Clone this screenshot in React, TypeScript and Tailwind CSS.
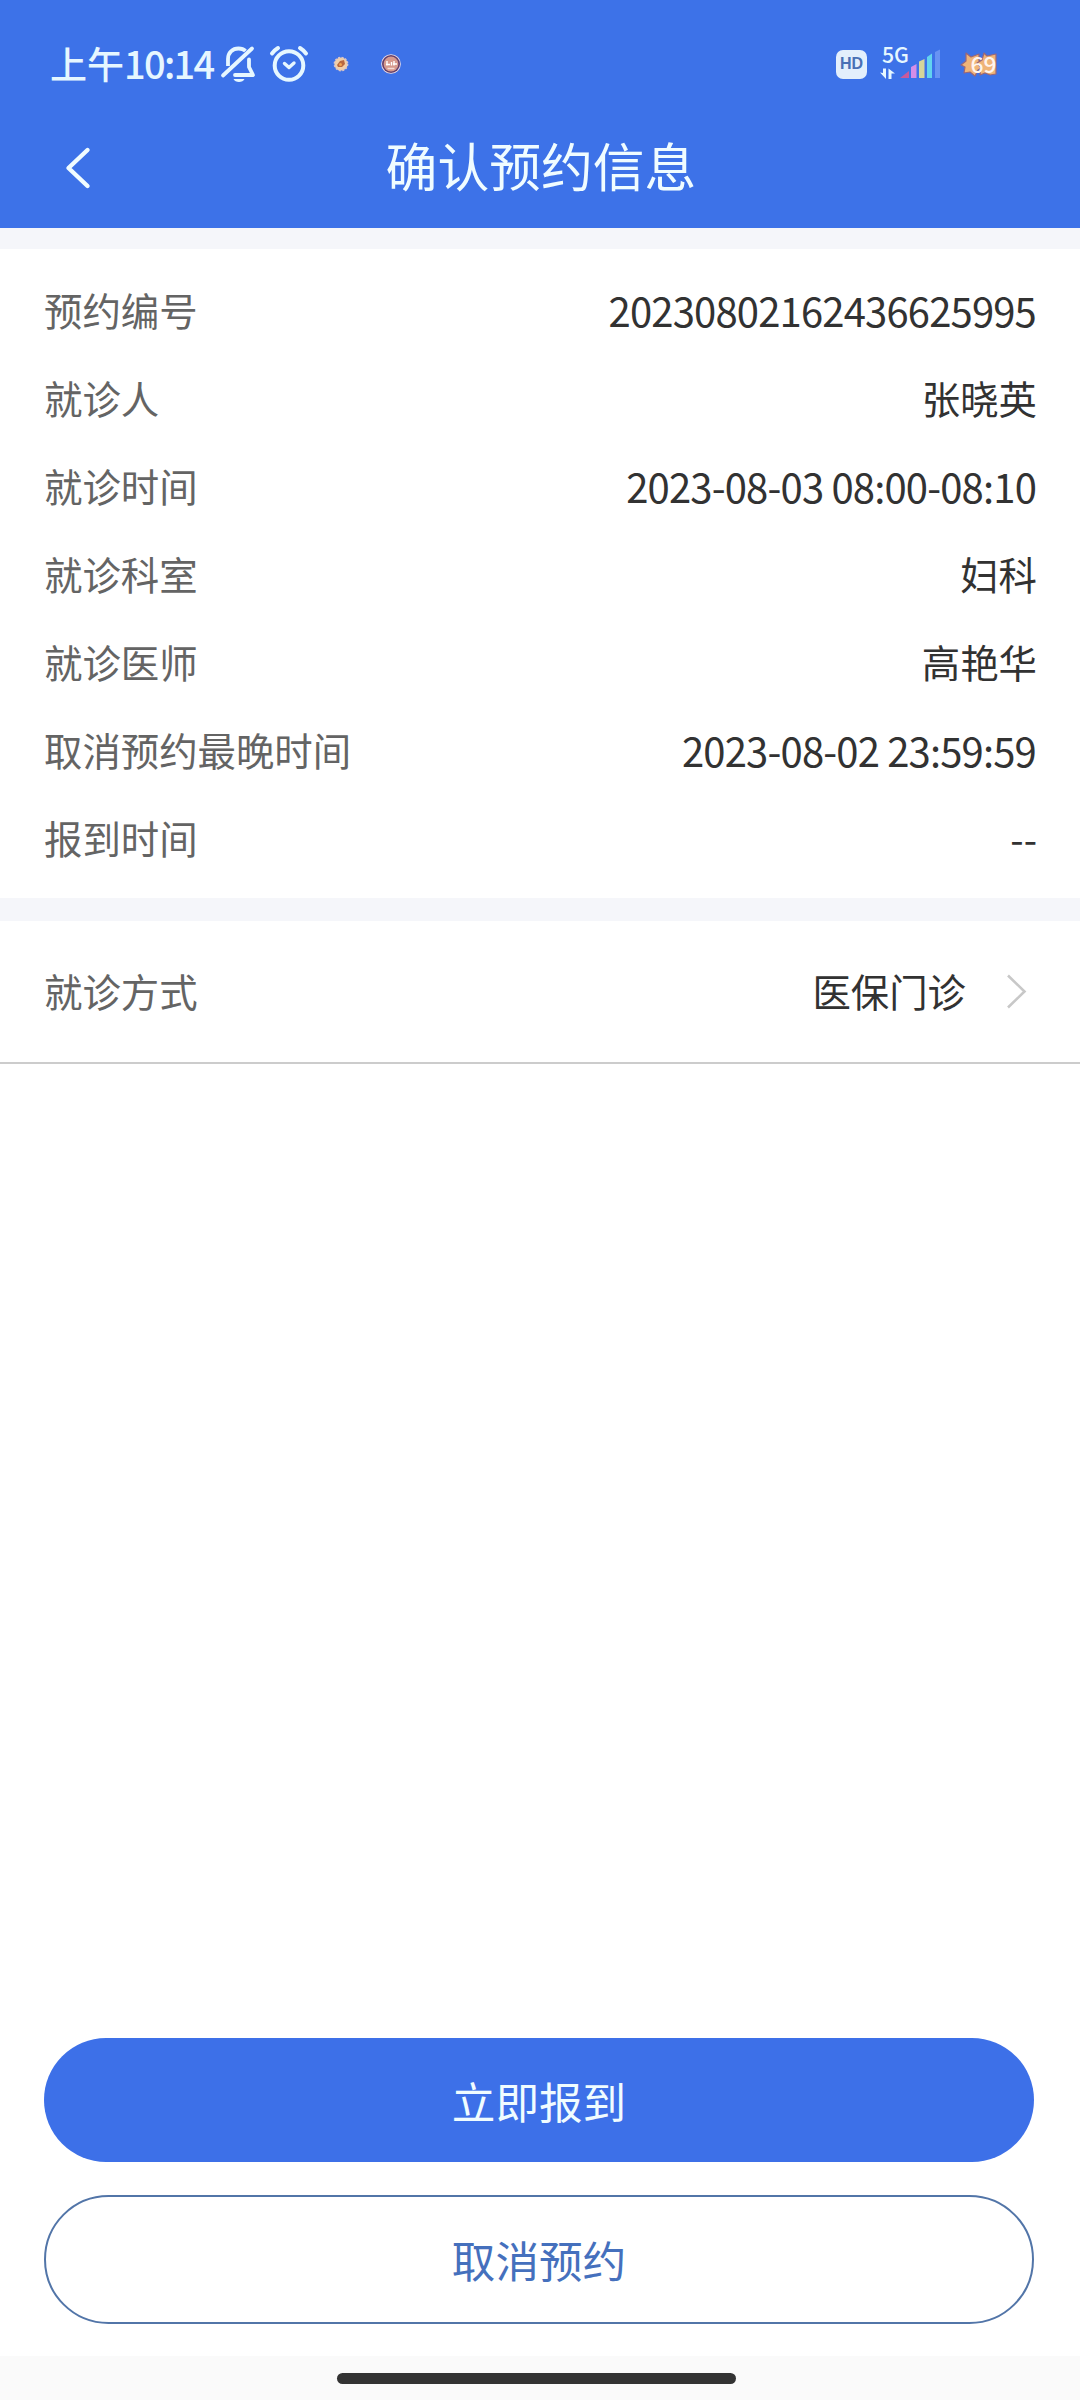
import clsx from "clsx";

const DETAILS = [
  { label: "预约编号", value: "20230802162436625995", numeric: true },
  { label: "就诊人", value: "张晓英" },
  { label: "就诊时间", value: "2023-08-03 08:00-08:10", numeric: true },
  { label: "就诊科室", value: "妇科" },
  { label: "就诊医师", value: "高艳华" },
  { label: "取消预约最晚时间", value: "2023-08-02 23:59:59", numeric: true },
  { label: "报到时间", value: "--" },
];

function MutedBellIcon() {
  return (
    <svg className="ml-[7px] h-[40px] w-[38px]" viewBox="0 0 38 40" fill="none">
      <g stroke="#e6f7ff" strokeWidth="3.8" strokeLinejoin="round">
        <path d="M8 22V15C8 8.500 12.500 4.500 18.500 4.500C21.500 4.500 24 5.500 25.500 7" />
        <path d="M29 15.500V23L33 31H15" strokeLinecap="round" />
        <path d="M3 31.500L32 4.500" strokeLinecap="round" />
      </g>
      <path d="M13.500 35H24.500C23 39 15 39 13.500 35Z" fill="#e6f7ff" />
    </svg>
  );
}

function AlarmIcon() {
  return (
    <svg
      className="ml-[11px] h-[40px] w-[40px]"
      viewBox="0 0 40 40"
      fill="none"
      stroke="#e6f7ff"
      strokeWidth="4"
      strokeLinecap="round"
      strokeLinejoin="round"
    >
      <circle cx="20" cy="21.500" r="14.300" />
      <path d="M3 9.500C4.500 7.500 6.500 5.500 9 4" />
      <path d="M37 9.500C35.500 7.500 33.500 5.500 31 4" />
      <path d="M15.500 19.500L20 23.500L25 19" strokeWidth="3.400" />
    </svg>
  );
}

function AppBadges() {
  return (
    <svg className="ml-[20px] h-[24px] w-[80px]" viewBox="0 0 80 24">
      <circle cx="12" cy="12" r="6.600" fill="#f1cfa8" stroke="#d9c4c8" strokeWidth="1.600" strokeDasharray="2 1.500" />
      <path d="M8 13L11 9L15 8L16 12L13 15L9 15Z" fill="#b8683f" />
      <circle cx="11.500" cy="12.500" r="1.500" fill="#f2a24d" />
      <circle cx="62" cy="12" r="9.800" fill="#f0dfe6" />
      <circle cx="62" cy="12" r="9" fill="#643f6b" />
      <circle cx="62" cy="12" r="7.400" fill="#d69a8e" />
      <path d="M58 9V13.500M57 12.500H61M62.500 10V13.500M65 9V13.500M64 12H68" stroke="#fff" strokeWidth="1.400" />
      <path d="M58.500 16.500H65.500" stroke="#f6dcd5" strokeWidth="1.500" />
    </svg>
  );
}

function SignalIcon() {
  return (
    <svg className="ml-[11px] h-[56px] w-[64px]" viewBox="878 36 64 56">
      <text
        x="882"
        y="62.500"
        fill="#e6f7ff"
        fontSize="22"
        fontWeight="500"
        textLength="27"
        lengthAdjust="spacingAndGlyphs"
      >
        5G
      </text>
      <path d="M880 72.500L886 79V68.500H883V73ZM888.500 68.500L895 73.500H891.500V79H888.500Z" fill="#e6f7ff" />
      <path d="M900 78L909 71V78Z" fill="#c85a9c" />
      <path d="M911 78V67L916.500 64V78Z" fill="#d58ee8" />
      <path d="M919 78V61.500L924.500 59V78Z" fill="#d5d59a" />
      <path d="M927 78V57L932 53.500V78Z" fill="#62d3ef" />
      <path d="M935 78V52L940 49.500V78Z" fill="#6893f3" />
    </svg>
  );
}

function BatteryIcon() {
  return (
    <svg className="ml-[18px] h-[56px] w-[40px]" viewBox="960 36 40 56">
      <g fill="#efb478" stroke="#9a6778" strokeWidth="1.200" strokeLinejoin="round">
        <path d="M966 53L971 57L979 54L979 61L983 67L978 70L975 76L970 72L964 73L965 67L961 65L966 61Z" />
        <path d="M984 53L987 56L996 54V74L990 75L985 73L980 75L981 68L977 63L982 60Z" />
      </g>
      <text
        x="970.500"
        y="72.500"
        fill="#fff4ee"
        fontSize="22"
        fontWeight="500"
        textLength="26"
        lengthAdjust="spacingAndGlyphs"
      >
        69
      </text>
    </svg>
  );
}

function StatusBar() {
  return (
    <div className="flex h-[128px] items-center pr-[80px] pl-[50px] text-[#e6f7ff]">
      <span className="pb-[3px] text-[37px] leading-none font-medium whitespace-nowrap">
        上午<span className="text-[38px] tracking-[-1.7px]">10:14</span>
      </span>
      <MutedBellIcon />
      <AlarmIcon />
      <AppBadges />
      <div className="ml-auto flex items-center">
        <span className="flex h-[29px] w-[31px] items-center justify-center rounded-[7px] bg-[#e3effc] font-['Liberation_Sans'] text-[16px] leading-none font-bold text-[#4970b5]">
          HD
        </span>
        <SignalIcon />
        <BatteryIcon />
      </div>
    </div>
  );
}

export default function App() {
  return (
    <div className="flex h-[2400px] w-[1080px] flex-col overflow-hidden bg-white font-['Noto_Sans_CJK_SC',sans-serif] text-[38.4px] text-[#323232]">
      <header className="h-[228px] bg-[#3d72e8]">
        <StatusBar />
        <div className="grid h-[80px] grid-cols-[100px_1fr_100px] items-center">
          <button type="button" aria-label="返回" className="pl-[64px]">
            <svg
              className="h-[44px] w-[28px]"
              viewBox="0 0 28 44"
              fill="none"
              stroke="#f0fcff"
              strokeWidth="4.4"
              strokeLinecap="round"
              strokeLinejoin="round"
            >
              <path d="M23.500 4L4.500 22L23.500 40" />
            </svg>
          </button>
          <h1 className="pb-[6px] pl-[2px] text-center text-[51.8px] leading-[74px] text-[#f0fcff]">
            确认预约信息
          </h1>
        </div>
      </header>

      <div className="h-[21px] bg-[#f5f6fa]" />

      <dl className="h-[649px] pt-[17px] pr-[43px] pl-[44px]">
        {DETAILS.map((item) => (
          <div key={item.label} className="flex h-[88px] items-center justify-between">
            <dt className="text-[#646464]">{item.label}</dt>
            <dd className={clsx(item.numeric && "mr-[1px] text-[40px] tracking-[-0.83px]")}>
              {item.value}
            </dd>
          </div>
        ))}
      </dl>

      <div className="h-[23px] bg-[#f5f6fa]" />

      <button
        type="button"
        className="flex h-[143px] items-center border-b-2 border-[#cccccc] pr-[53px] pb-[1px] pl-[44px]"
      >
        <span className="text-[#646464]">就诊方式</span>
        <span className="ml-auto">医保门诊</span>
        <svg
          className="ml-[41px] h-[36px] w-[20px]"
          viewBox="0 0 20 36"
          fill="none"
          stroke="#c8c8c8"
          strokeWidth="2.600"
        >
          <path d="M1 2.500L17.500 18.500L1 34.500" />
        </svg>
      </button>

      <div className="mt-auto flex flex-col gap-[33px] pr-[46px] pb-[32px] pl-[44px] text-[43.6px]">
        <button type="button" className="h-[124px] rounded-full bg-[#3d70e8] pt-[2px] text-[#f0fcff]">
          立即报到
        </button>
        <button type="button" className="h-[129px] rounded-full border-2 border-[#5275a8] text-[#4570bd]">
          取消预约
        </button>
      </div>

      <div className="flex h-[44px] justify-center bg-[#fafafa] pt-[17px] pr-[7px]">
        <div className="h-[11px] w-[399px] rounded-full bg-[#333333]" />
      </div>
    </div>
  );
}
